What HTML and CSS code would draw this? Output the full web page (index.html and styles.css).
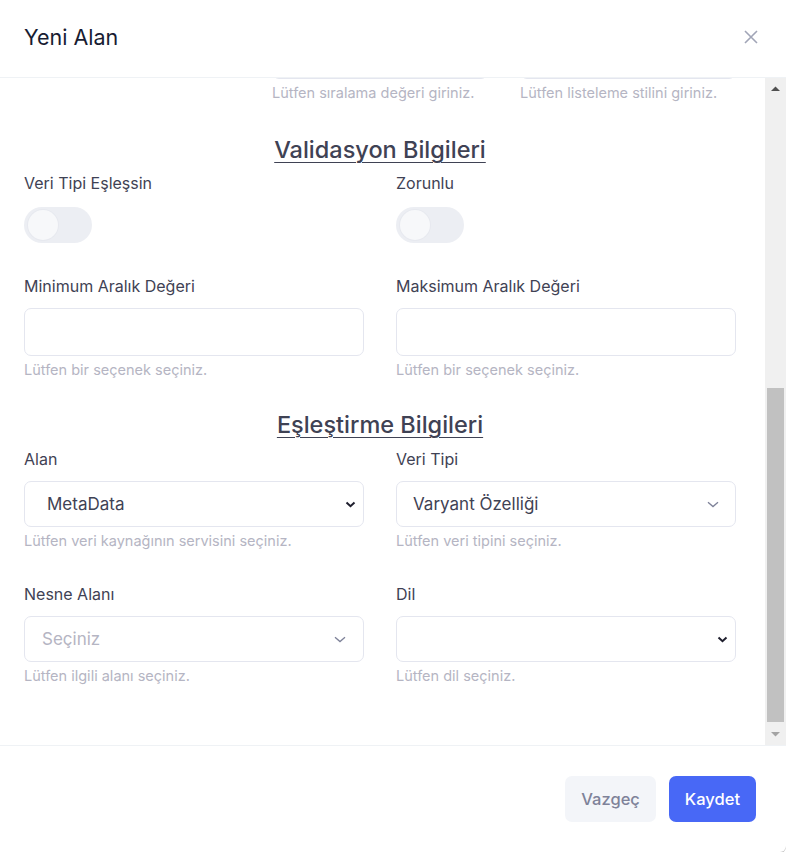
FILE: index.html
```html
<!DOCTYPE html>
<html lang="tr">
<head>
<meta charset="utf-8">
<title>Yeni Alan</title>
<link rel="stylesheet" href="styles.css">
</head>
<body>
<div class="modal">
  <div class="modal-header">
    <h2 class="modal-title">Yeni Alan</h2>
    <button class="close-btn" aria-label="Kapat">
      <svg width="16" height="16" viewBox="0 0 16 16"><path d="M2 2L14 14M14 2L2 14" stroke="#a1a5b7" stroke-width="1.6" fill="none"/></svg>
    </button>
  </div>
  <div class="modal-body">
    <div class="scroll-area">
    <div class="form">
      <h3 class="section-title first">Genel Bilgiler</h3>
      <div class="row cols-2">
        <div class="field"><label class="label">Alan Adı</label><div class="input"></div><div class="hint">Lütfen alan adını giriniz.</div></div>
        <div class="field"><label class="label">Alan Kodu</label><div class="input"></div><div class="hint">Lütfen alan kodunu giriniz.</div></div>
      </div>
      <div class="row cols-2">
        <div class="field"><label class="label">Görünen Ad</label><div class="input"></div><div class="hint">Lütfen görünen adı giriniz.</div></div>
        <div class="field"><label class="label">Alan Grubu</label><div class="input"></div><div class="hint">Lütfen alan grubunu seçiniz.</div></div>
      </div>
      <div class="row cols-1">
        <div class="field"><label class="label">Açıklama</label><div class="input textarea"></div><div class="hint">Lütfen açıklama giriniz.</div></div>
      </div>
      <div class="row cols-3">
        <div class="field"><label class="label">Listede Göster</label><div class="switch"><span class="knob"></span></div></div>
        <div class="field"><label class="label">Sıralama</label><div class="input"></div><div class="hint">Lütfen sıralama değeri giriniz.</div></div>
        <div class="field"><label class="label">Listeleme Stili</label><div class="input"></div><div class="hint">Lütfen listeleme stilini giriniz.</div></div>
      </div>

      <h3 class="section-title validation">Validasyon Bilgileri</h3>
      <div class="row cols-2 toggle-row">
        <div class="field"><label class="label">Veri Tipi Eşleşsin</label><div class="switch"><span class="knob"></span></div></div>
        <div class="field"><label class="label">Zorunlu</label><div class="switch"><span class="knob"></span></div></div>
      </div>
      <div class="row cols-2">
        <div class="field"><label class="label">Minimum Aralık Değeri</label><div class="input"></div><div class="hint">Lütfen bir seçenek seçiniz.</div></div>
        <div class="field"><label class="label">Maksimum Aralık Değeri</label><div class="input"></div><div class="hint">Lütfen bir seçenek seçiniz.</div></div>
      </div>

      <h3 class="section-title">Eşleştirme Bilgileri</h3>
      <div class="row cols-2">
        <div class="field"><label class="label">Alan</label>
          <div class="input select native"><span class="value">MetaData</span>
            <svg width="11" height="7" viewBox="0 0 11 7"><path d="M1.5 1.5L5.5 5.2L9.5 1.5" stroke="#1e1e2d" stroke-width="2" fill="none"/></svg>
          </div>
          <div class="hint">Lütfen veri kaynağının servisini seçiniz.</div></div>
        <div class="field"><label class="label">Veri Tipi</label>
          <div class="input select custom"><span class="value">Varyant Özelliği</span>
            <svg width="12" height="7" viewBox="0 0 12 7"><path d="M1 1.2L6 5.6L11 1.2" stroke="#7e8299" stroke-width="1.3" fill="none"/></svg>
          </div>
          <div class="hint">Lütfen veri tipini seçiniz.</div></div>
      </div>
      <div class="row cols-2 last">
        <div class="field"><label class="label">Nesne Alanı</label>
          <div class="input select custom placeholder"><span class="value">Seçiniz</span>
            <svg width="12" height="7" viewBox="0 0 12 7"><path d="M1 1.2L6 5.6L11 1.2" stroke="#7e8299" stroke-width="1.3" fill="none"/></svg>
          </div>
          <div class="hint">Lütfen ilgili alanı seçiniz.</div></div>
        <div class="field"><label class="label">Dil</label>
          <div class="input select native"><span class="value"></span>
            <svg width="11" height="7" viewBox="0 0 11 7"><path d="M1.5 1.5L5.5 5.2L9.5 1.5" stroke="#1e1e2d" stroke-width="2" fill="none"/></svg>
          </div>
          <div class="hint">Lütfen dil seçiniz.</div></div>
      </div>
    </div>
    </div>
    <div class="scrollbar" aria-hidden="true">
      <div class="sb-btn"><svg width="9" height="5" viewBox="0 0 9 5"><path d="M0 5L4.5 0.5L9 5Z" fill="#505050"/></svg></div>
      <div class="sb-track"><div class="sb-thumb"></div></div>
      <div class="sb-btn"><svg width="9" height="5" viewBox="0 0 9 5"><path d="M0 0L4.5 4.5L9 0Z" fill="#a3a3a3"/></svg></div>
    </div>
  </div>
  <div class="modal-footer">
    <button class="btn btn-light">Vazgeç</button>
    <button class="btn btn-primary">Kaydet</button>
  </div>
</div>
<script src="script.js"></script>
</body>
</html>
```

FILE: styles.css
```css
* { box-sizing: border-box; }
html, body { margin: 0; padding: 0; background: #fff; }
body { font-family: Inter, "Noto Sans", sans-serif; color: #3f4254; }

.modal {
  width: 786px;
  height: 852px;
  display: flex;
  flex-direction: column;
  background: #fff;
  border-bottom-right-radius: 6px;
  box-shadow: 0 1px 0 #c4c4c4;
  overflow: hidden;
}

.modal-header {
  flex: none;
  height: 78px;
  display: flex;
  align-items: center;
  justify-content: space-between;
  padding: 0 27px 3px 24px;
  border-bottom: 1px solid #eff2f5;
}
.modal-title {
  margin: 0;
  font-size: 21.5px;
  line-height: 24px;
  font-weight: 400;
  color: #181c32;
}
.close-btn {
  border: 0;
  background: transparent;
  padding: 0;
  width: 16px;
  height: 16px;
  display: flex;
}

.modal-body {
  flex: 1;
  min-height: 0;
  display: flex;
}
.scroll-area {
  flex: 1;
  min-width: 0;
  overflow: hidden;
}
.scrollbar {
  flex: none;
  width: 21px;
  background: #f0f0f0;
  display: flex;
  flex-direction: column;
}
.sb-btn {
  flex: none;
  height: 21px;
  display: flex;
  align-items: center;
  justify-content: center;
}
.sb-track {
  flex: 1;
  display: flex;
  flex-direction: column;
  justify-content: flex-end;
  padding: 0 2px 2px;
}
.sb-thumb {
  height: 334px;
  background: #c1c1c1;
}

.form {
  display: flex;
  flex-direction: column;
  padding: 20px 29px 59px 24px;
}

.section-title {
  margin: 1px 0 11px;
  text-align: center;
  font-size: 23.5px;
  line-height: 24px;
  font-weight: 500;
  color: #3f4254;
  text-decoration: underline;
  text-decoration-thickness: 1px;
  text-underline-offset: 4px;
}
.section-title.first { margin-top: 0; }
.section-title.validation { margin: 3px 0 10px; }

.row {
  display: grid;
  column-gap: 32px;
  margin-bottom: 32px;
}
.row.last { margin-bottom: 0; }
.cols-1 { grid-template-columns: 1fr; }
.cols-2 { grid-template-columns: 1fr 1fr; }
.cols-3 { grid-template-columns: 1fr 1fr 1fr; }

.field { display: flex; flex-direction: column; }
.label {
  font-size: 16px;
  line-height: 22px;
  color: #3f4254;
  margin-bottom: 11px;
}
.toggle-row .label { margin-bottom: 13px; }

.input {
  height: 48px;
  border: 1px solid #e4e6ef;
  border-radius: 7px;
  background: #fff;
}
.textarea { height: 92px; }

.hint {
  margin-top: 4px;
  font-size: 14.5px;
  line-height: 20px;
  color: #b5b5c3;
}

.select {
  height: 46px;
  display: flex;
  align-items: center;
  justify-content: space-between;
  font-size: 17px;
  color: #3f4254;
}
.select.native { padding: 0 7px 0 22px; }
.select.custom { padding: 0 16px 0 16px; }
.select.placeholder { padding: 0 17px 0 17px; }
.select.placeholder .value { color: #b5b5c3; }
.select svg { flex: none; }

.switch {
  width: 68px;
  height: 36px;
  border-radius: 18px;
  background: #eceef3;
  padding: 3px 4px;
  display: flex;
  align-items: center;
}
.knob {
  width: 30px;
  height: 30px;
  border-radius: 50%;
  background: #f7f8fa;
  box-shadow: 0 0 0 1px #e7e9ef;
}

.modal-footer {
  flex: none;
  border-top: 1px solid #eff2f5;
  padding: 30px 30px 30px 24px;
  display: flex;
  justify-content: flex-end;
  gap: 13px;
}
.btn {
  height: 46px;
  border: 0;
  border-radius: 7px;
  padding: 0 16px;
  font-family: Inter, "Noto Sans", sans-serif;
  font-size: 16.5px;
  font-weight: 500;
}
.btn-light { background: #f3f5f9; color: #7e8299; }
.btn-primary { background: #4868f6; color: #fff; }
```

FILE: script.js
```js
var area = document.querySelector('.scroll-area');
area.scrollTop = area.scrollHeight;
```
